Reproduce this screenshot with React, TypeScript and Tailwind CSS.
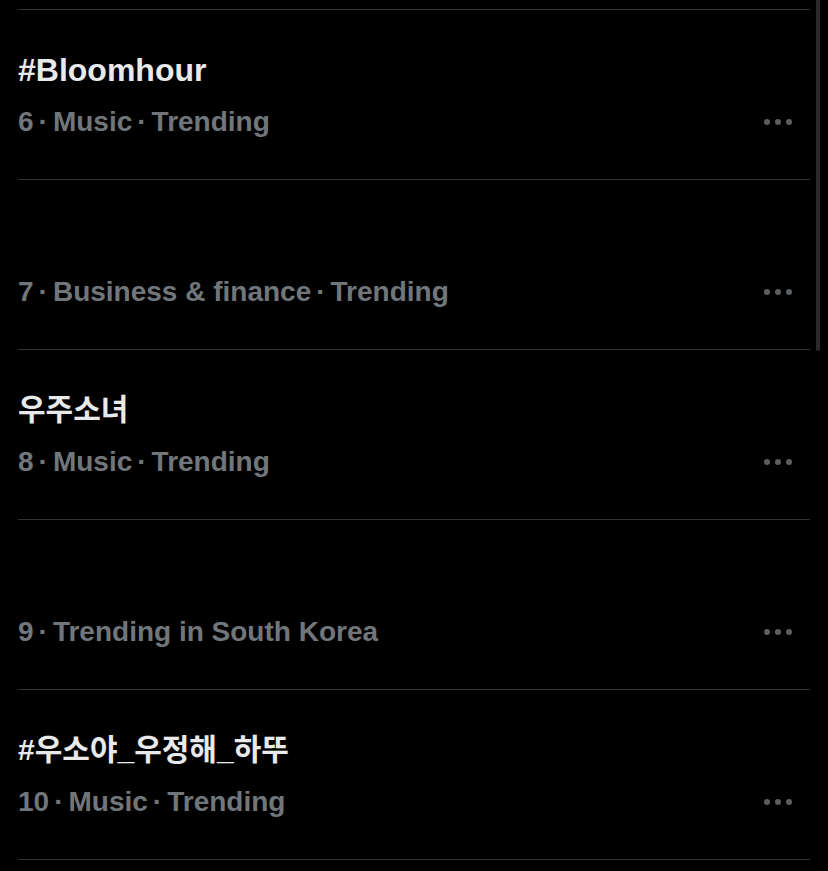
const Trends = [
  { title: "#Bloomhour", meta: ["6", "Music", "Trending"] },
  { title: "", meta: ["7", "Business & finance", "Trending"] },
  { title: "우주소녀", meta: ["8", "Music", "Trending"] },
  { title: "", meta: ["9", "Trending in South Korea"] },
  { title: "#우소야_우정해_하뚜", meta: ["10", "Music", "Trending"] },
];

const font = { fontFamily: '"Liberation Sans", "Noto Sans CJK KR", sans-serif' };

const MoreDots = () => (
  <div className="flex items-center gap-[5px]">
    <span className="w-[6px] h-[6px] rounded-full bg-[#5c5f62]"></span>
    <span className="w-[6px] h-[6px] rounded-full bg-[#5c5f62]"></span>
    <span className="w-[6px] h-[6px] rounded-full bg-[#5c5f62]"></span>
  </div>
);

export default function App() {
  return (
    <div className="w-[828px] h-[871px] bg-black overflow-hidden flex" style={font}>
      {/* Trend list */}
      <div className="w-[810px] pl-[18px] pt-[9px]">
        <div className="border-t border-[#2f3336]">
          {Trends.map((t, key) => {
            const korean = /[가-힣]/.test(t.title);
            return (
              <div key={key} className="border-b border-[#2f3336] pt-[40px] pb-[39px] pr-[18px]">
                <div
                  className={`h-[40px] leading-[40px] font-bold text-[#e7e9ea] whitespace-nowrap ${
                    korean ? "text-[30px]" : "text-[32px]"
                  }`}
                >
                  {t.title}
                </div>
                <div className="mt-[14px] h-[36px] flex items-center justify-between">
                  <span className="leading-[36px] text-[28px] font-bold text-[#71767b] whitespace-nowrap">
                    {t.meta.map((part, i) => (
                      <span key={i}>
                        {i > 0 && <span className="mx-[5px]">·</span>}
                        {part}
                      </span>
                    ))}
                  </span>
                  <MoreDots />
                </div>
              </div>
            );
          })}
        </div>
      </div>

      {/* Scrollbar */}
      <div className="ml-[6px] w-[4px] h-[351px] rounded-b-full bg-[#2a2a2a]"></div>
    </div>
  );
}
